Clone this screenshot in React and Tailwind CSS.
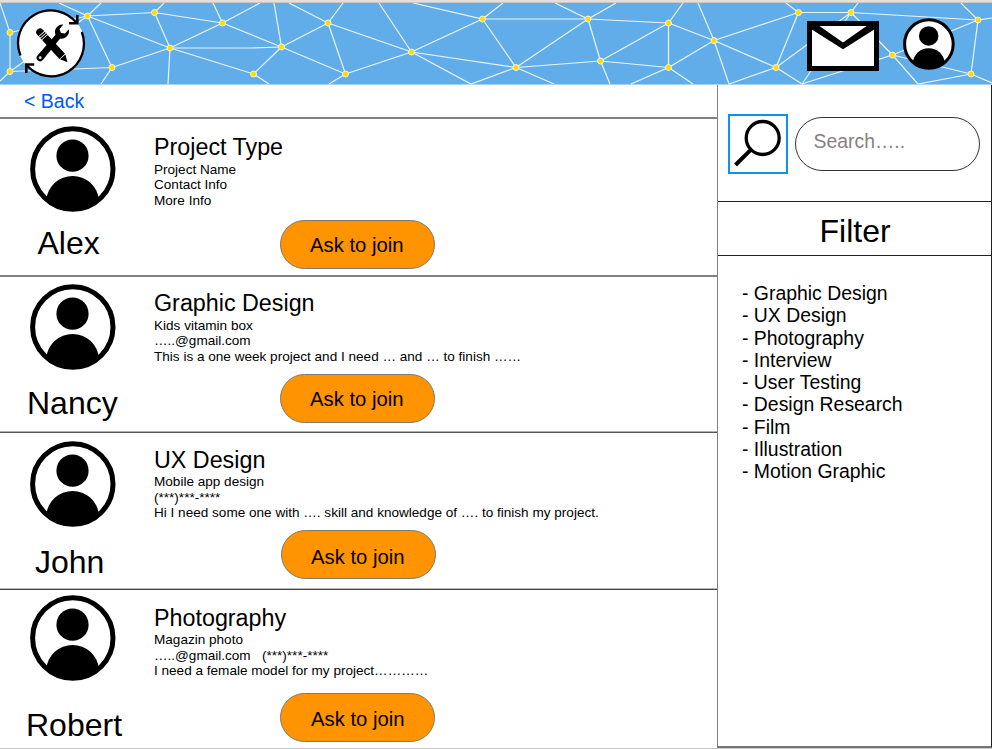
import React from 'react';

const nodes = [
  [10, 32.5], [10, 71.5], [87.5, 16], [112, 67.5], [154.5, 12.5], [170, 48], [222.5, 23],
  [281.5, 47], [328, 23], [253.5, 74], [345.5, 74], [411.5, 52], [482.5, 19], [516, 67.5],
  [588, 19], [600.5, 61], [668.5, 23], [668.5, 67.5], [714, 40.5], [776, 67.5], [798.5, 12.5],
  [851, 12.5], [892.5, 55], [971, 74], [978, 20],
];

// Lines between two nodes, by index
const links = [
  [0, 1], [0, 2], [1, 2], [1, 3], [2, 4], [2, 5], [2, 3], [3, 5], [4, 5], [4, 6], [5, 6],
  [5, 9], [6, 7], [7, 9], [7, 8], [7, 10], [8, 11], [8, 10], [10, 11], [11, 12], [11, 13],
  [12, 14], [12, 13], [13, 14], [13, 15], [14, 16], [14, 15], [15, 16], [15, 17], [16, 17],
  [16, 18], [17, 18], [18, 20], [18, 19], [19, 20], [19, 21], [20, 21], [21, 24], [21, 22],
  [22, 24], [22, 23], [23, 24],
];

// Lines that run out of the banner
const edges = [
  'M0 3L10 32.5', 'M10 71.5L0 81', 'M59 3L87.5 16L101 3', 'M112 67.5L101 84', 'M154.5 12.5L164 3',
  'M213 3L222.5 23', 'M222.5 23L260 3', 'M170 48H250L281.5 47', 'M170 48L168 84', 'M269 84L253.5 74',
  'M281.5 47L274 3', 'M289 3L328 23L343 3', 'M345.5 74L329 84', 'M411.5 52L379 3',
  'M411.5 52L471 84L516 67.5', 'M413 3L482.5 19L503 3', 'M516 67.5L554 84', 'M555 3L588 19L616 3',
  'M600.5 61L610 84', 'M668.5 23L683 3', 'M631 84L668.5 67.5L693 84', 'M698 3L714 40.5L729 84L776 67.5L802 84L851 12.5',
  'M786 3L798.5 12.5', 'M851 12.5L858 3', 'M802 84L892.5 55L918 84L971 74L992 83', 'M961 3L978 20L992 18',
];

const projects = [
  {
    name: 'Alex',
    title: 'Project Type',
    lines: ['Project Name', 'Contact Info', 'More Info'],
    row: 'h-[158px] border-t-2 border-t-[#808080]',
    avatar: 'mt-[7px]',
    nameStyle: 'mt-[13px] ml-[37.5px]',
    text: 'mt-[14px]',
    lineStyle: 'pt-[0.7px]',
    button: 'mt-3 ml-[126px] pl-[29px] pt-0',
  },
  {
    name: 'Nancy',
    title: 'Graphic Design',
    lines: ['Kids vitamin box', '…..@gmail.com', 'This is a one week project and I need … and … to finish ……'],
    row: 'h-[156px] border-t-2 border-t-[#808080]',
    avatar: 'mt-[7px]',
    nameStyle: 'mt-[15px] ml-[27px]',
    text: 'mt-3',
    lineStyle: 'pt-[0.7px]',
    button: 'mt-[10px] ml-[126px] pl-[29px] pt-0',
  },
  {
    name: 'John',
    title: 'UX Design',
    lines: ['Mobile app design', '(***)***-****', 'Hi I need some one with …. skill and knowledge of …. to finish my project.'],
    row: 'h-[157px] border-t border-t-[#b0b0b0] pt-px shadow-[inset_0_1px_0_#555]',
    avatar: 'mt-2',
    nameStyle: 'mt-[17px] ml-[35px]',
    text: 'mt-[13px]',
    lineStyle: 'pt-0',
    button: 'mt-[9px] ml-[127px] pl-[29px] pt-1',
  },
  {
    name: 'Robert',
    title: 'Photography',
    lines: ['Magazin photo', '…..@gmail.com   (***)***-****', 'I need a female model for my project…………'],
    row: 'h-[160px] border-t border-t-[#bbb] pt-px shadow-[inset_0_1px_0_#444]',
    avatar: 'mt-[5px]',
    nameStyle: 'mt-[25.5px] ml-[26px]',
    text: 'mt-[14px]',
    lineStyle: 'pt-0',
    button: 'mt-[14px] ml-[126px] pl-[30px] pt-0.5',
  },
];

const filters = [
  'Graphic Design', 'UX Design', 'Photography', 'Interview', 'User Testing',
  'Design Research', 'Film', 'Illustration', 'Motion Graphic',
];

function Avatar({ className }) {
  return (
    <svg viewBox="0 0 86 86" className={className}>
      <circle cx="42.8" cy="43" r="40.2" fill="#fff" stroke="#000" strokeWidth="5" />
      <circle cx="42.5" cy="29.7" r="16.1" />
      <path d="M16.3 74A26.4 26.4 0 0 1 68.9 74C62 81 54 84.5 42.8 84.5S23 81 16.3 74Z" />
    </svg>
  );
}

function Network() {
  return (
    <svg viewBox="0 3 992 82" className="absolute inset-0 h-[82px] w-[992px]">
      <g stroke="#e9f4fc" strokeWidth="1.2" fill="none">
        {links.map(([a, b]) => (
          <line key={`${a}-${b}`} x1={nodes[a][0]} y1={nodes[a][1]} x2={nodes[b][0]} y2={nodes[b][1]} />
        ))}
        {edges.map((d) => <path key={d} d={d} />)}
      </g>
      <g fill="#ffdc00" stroke="#f4f3d8" strokeWidth="1">
        {nodes.map(([x, y]) => <circle key={`${x}-${y}`} cx={x} cy={y} r="3" />)}
      </g>
    </svg>
  );
}

function Logo() {
  return (
    <svg viewBox="16 9 70 70" className="relative mt-[6px] ml-4 h-[70px] w-[70px]">
      <circle cx="51.3" cy="43.8" r="33.3" fill="#fff" />
      <g fill="none" stroke="#000" strokeWidth="2.3">
        <path d="M20.5 55.5A32.7 32.7 0 0 1 76.8 23.3" />
        <path d="M81.8 32A32.7 32.7 0 0 1 26.5 65" />
        <path d="M69 23.3H77.3V15" strokeWidth="2.6" />
        <path d="M34.2 64.5H26.3V73" strokeWidth="2.6" />
      </g>
      {/* Wrench */}
      <g transform="translate(51.4 44.3) rotate(40)">
        <path d="M-3 -10C-8 -12.5 -8 -20 -3.6 -22.6V-17L0 -14.8L3.6 -17V-22.6C8 -20 8 -12.5 3 -10L3.5 17.5A3.5 3.5 0 0 1 -3.5 17.5Z" />
        <circle cx="0" cy="17.4" r="1.5" fill="#b9dcf6" />
      </g>
      {/* Pencil */}
      <g transform="translate(51.7 44.9) rotate(-42.5)">
        <path d="M-3.8 -15.3V-17.2A3.8 3.8 0 0 1 3.8 -17.2V-15.3Z" />
        <path d="M-3.8 -14.5H3.8V-13.1H-3.8ZM-3.8 -12.3H3.8V-10.9H-3.8Z" />
        <path d="M-3.8 -10.1H3.8V15.5H-3.8ZM-3.6 16.3H3.6L0 23.4Z" />
      </g>
    </svg>
  );
}

function MailIcon() {
  return (
    <svg viewBox="0 0 72 50" className="relative mt-[18px] h-[50px] w-[72px]">
      <rect x="2.5" y="2.5" width="67" height="45" fill="#fff" stroke="#000" strokeWidth="5" />
      <path d="M4 4H11L36 21.5L61 4H68V8L36 28.3L4 8Z" />
    </svg>
  );
}

function ProjectRow({ project }) {
  return (
    <section className={`flex ${project.row}`}>
      <div className="w-[154px] shrink-0">
        <Avatar className={`ml-[29.5px] h-[86px] w-[86px] ${project.avatar}`} />
        <p className={`text-[32px] leading-9 ${project.nameStyle}`}>{project.name}</p>
      </div>
      <div className={project.text}>
        <h2 className="h-7 text-[23.3px] leading-7">{project.title}</h2>
        <div className={`h-[47px] text-[13.57px] leading-[15.6px] whitespace-pre ${project.lineStyle}`}>
          {project.lines.map((line) => <p key={line}>{line}</p>)}
        </div>
        <button className={`flex h-[49px] w-[155px] items-center rounded-full border border-[#80796c] bg-[#ff9300] text-[20.3px] leading-6 ${project.button}`}>
          Ask to join
        </button>
      </div>
    </section>
  );
}

export default function App() {
  return (
    <div className="h-[749px] w-[992px] overflow-hidden bg-white font-['Liberation_Sans',Arial,sans-serif] text-black">
      <div className="h-[3px] border-t-2 border-[#e0e0e0] bg-[#c8c8c8]" />
      <header className="relative flex h-[82px] items-start border-b border-[#a9d3f4] bg-[#60adea]">
        <Network />
        <Logo />
        <div className="ml-[721px]">
          <MailIcon />
        </div>
        <Avatar className="relative mt-[14.5px] ml-6 h-[52px] w-[52px]" />
      </header>

      <div className="flex h-[663px]">
        <main className="w-[717px]">
          <div className="h-8 pt-[5px] pl-6">
            <a className="block text-[19.5px] leading-[22px] text-[#0056ff]">&lt; Back</a>
          </div>
          {projects.map((project) => <ProjectRow key={project.name} project={project} />)}
        </main>

        <aside className="w-[275px] border-r border-b-2 border-l border-r-[#222] border-b-[#777] border-l-[#808080]">
          <div className="flex h-[116px] pt-[29px] pl-[10px]">
            <div className="h-[60px] w-[60px] border-2 border-[#0d94ea]">
              <svg viewBox="0 0 56 56" className="h-14 w-14" fill="none" stroke="#000">
                <circle cx="32.7" cy="22" r="16.5" strokeWidth="3.3" />
                <path d="M21 33.7L5.5 49" strokeWidth="4" />
              </svg>
            </div>
            <div className="mt-[3px] ml-[7px] h-[54px] w-[185px] rounded-full border border-[#333] pt-3 pl-[17.5px] text-[19.4px] leading-[22px] text-[#8a8080]">
              Search…..
            </div>
          </div>
          <div className="h-[55px] border-y border-[#222] pt-[11px] pl-[101.5px]">
            <h1 className="text-[32px] leading-9">Filter</h1>
          </div>
          <ul className="pt-[26px] pl-6 text-[19.4px] leading-[22.3px]">
            {filters.map((item) => <li key={item}>- {item}</li>)}
          </ul>
        </aside>
      </div>
      <div className="h-px bg-[#c8c8c8]" />
    </div>
  );
}
